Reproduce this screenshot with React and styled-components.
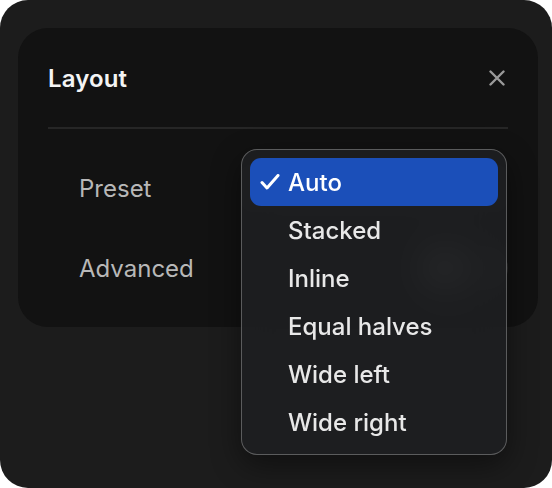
import React from "react";
import styled, { createGlobalStyle } from "styled-components";

const Global = createGlobalStyle`
  html, body { margin: 0; padding: 0; background: #ffffff; }
  body { font-family: Inter, "Noto Sans", sans-serif; -webkit-font-smoothing: antialiased; }
`;

const Frame = styled.div`
  width: 552px;
  height: 488px;
  box-sizing: border-box;
  background: #1c1c1c;
  border-radius: 28px;
  padding: 28px 14px 0 18px;
`;

const Panel = styled.section`
  background: #121212;
  border-radius: 30px;
  padding: 0 30px 19px 30px;
  position: relative;
`;

const Header = styled.header`
  height: 99px;
  display: flex;
  align-items: center;
  justify-content: space-between;
  box-sizing: border-box;
`;

const Title = styled.h2`
  margin: 0;
  font-size: 24px;
  font-weight: 600;
  color: #f4f4f4;
  letter-spacing: 0.1px;
  transform: translateY(1px);
`;

const CloseButton = styled.button`
  width: 24px;
  height: 24px;
  padding: 0;
  margin-right: -1px;
  border: none;
  background: transparent;
  display: flex;
  align-items: center;
  justify-content: center;
  cursor: pointer;
`;

const Divider = styled.hr`
  margin: 0 0 19px 0;
  border: none;
  height: 2px;
  background: #262626;
`;

const Row = styled.div`
  height: 80px;
  display: flex;
  align-items: center;
  justify-content: space-between;
`;

const Label = styled.span`
  padding-left: 31px;
  font-size: 24px;
  color: #b8b8b8;
  font-weight: 400;
`;

const SelectWrap = styled.div`
  position: relative;
  width: 266px;
  height: 48px;
  margin-right: 1px;
`;

const Trigger = styled.div`
  height: 48px;
  border-radius: 12px;
  background: #1f1f1f;
`;

const Switch = styled.div`
  width: 88px;
  height: 44px;
  border-radius: 22px;
  background: #2a2a2a;
  display: flex;
  align-items: center;
  padding: 0 4px;
  box-sizing: border-box;
`;

const Knob = styled.div`
  width: 36px;
  height: 36px;
  border-radius: 50%;
  background: #7a7a7a;
`;

const Menu = styled.ul`
  position: absolute;
  top: -15px;
  left: 0;
  width: 266px;
  box-sizing: border-box;
  margin: 0;
  padding: 8px;
  list-style: none;
  border-radius: 16px;
  border: 1px solid rgba(255, 255, 255, 0.28);
  background: rgba(30, 31, 33, 0.88);
  backdrop-filter: blur(18px);
  box-shadow: 0 10px 30px rgba(0, 0, 0, 0.45);
  z-index: 10;
`;

const Item = styled.li`
  height: 48px;
  border-radius: 11px;
  display: flex;
  align-items: center;
  padding-left: 10px;
  font-size: 24px;
  font-weight: 500;
  color: ${(p) => (p.$selected ? "#ffffff" : "#e8e8e8")};
  background: ${(p) => (p.$selected ? "#1b4fb9" : "transparent")};
`;

const CheckSlot = styled.span`
  width: 28px;
  display: flex;
  align-items: center;
`;

const items = ["Auto", "Stacked", "Inline", "Equal halves", "Wide left", "Wide right"];

export default function App() {
  return (
    <>
      <Global />
      <Frame>
        <Panel>
          <Header>
            <Title>Layout</Title>
            <CloseButton aria-label="Close">
              <svg width="16" height="16" viewBox="0 0 16 16">
                <path d="M1.5 1.5 L14.5 14.5 M14.5 1.5 L1.5 14.5" stroke="#9a9a9a" strokeWidth="2.4" strokeLinecap="round" />
              </svg>
            </CloseButton>
          </Header>
          <Divider />
          <Row>
            <Label>Preset</Label>
            <SelectWrap>
              <Trigger />
              <Menu>
                {items.map((it, i) => (
                  <Item key={it} $selected={i === 0}>
                    <CheckSlot>
                      {i === 0 && (
                        <svg width="20" height="16" viewBox="0 0 20 16">
                          <path d="M2 8.5 L7 14 L18 1.5" fill="none" stroke="#ffffff" strokeWidth="3" strokeLinecap="round" strokeLinejoin="round" />
                        </svg>
                      )}
                    </CheckSlot>
                    {it}
                  </Item>
                ))}
              </Menu>
            </SelectWrap>
          </Row>
          <Row>
            <Label>Advanced</Label>
            <Switch>
              <Knob />
            </Switch>
          </Row>
        </Panel>
      </Frame>
    </>
  );
}
